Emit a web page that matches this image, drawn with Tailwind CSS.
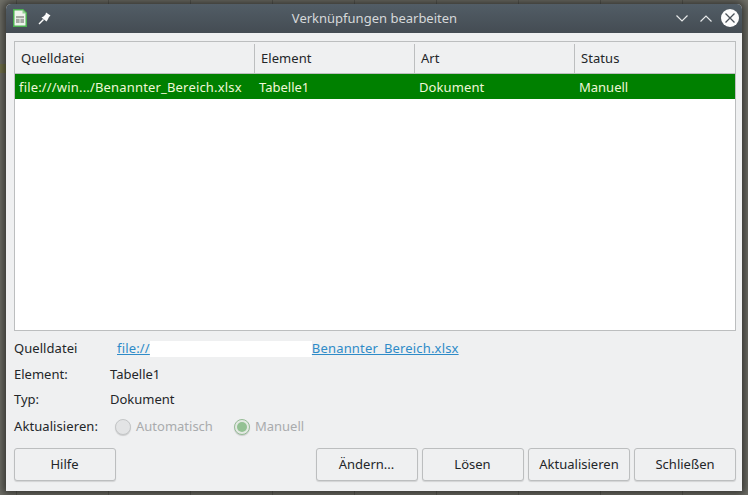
<!DOCTYPE html>
<html lang="de">
<head>
  <meta charset="UTF-8">
  <title>Verknüpfungen bearbeiten</title>
  <script src="https://cdn.jsdelivr.net/npm/@tailwindcss/browser@4"></script>
</head>
<body class="w-[748px] h-[495px] overflow-hidden relative bg-[#72726a] font-['Noto_Sans',sans-serif] text-[13px] text-[#232629]">

<!-- spreadsheet behind the dialog -->
<div class="absolute inset-0 bg-[repeating-linear-gradient(90deg,transparent_0,transparent_81px,#5e5e57_81px,#5e5e57_82px)] bg-[position:27px_0]"></div>
<div class="absolute left-0 top-[64px] w-[6px] h-[9px] bg-[#77774e]"></div>

<!-- window -->
<div class="absolute left-[6px] top-[4px] w-[736px] h-[487px] flex flex-col bg-[#eff0f1] rounded-t-[5px] shadow-[0_0_8px_3px_rgba(0,0,0,0.55)] overflow-hidden">

  <!-- title bar -->
  <div class="h-[29px] shrink-0 flex items-center relative bg-gradient-to-b from-[#525d66] to-[#444c53]">
    <svg class="absolute left-[7px] top-[5px]" width="14" height="18" viewBox="0 0 14 18">
      <path d="M0.75 0.75H10L13.25 4V17.25H0.75Z" fill="#eef3ec" stroke="#4caf50" stroke-width="1.5"/>
      <path d="M9.5 0.5V4.5H13.5Z" fill="#8fcf8f"/>
      <rect x="3" y="7" width="8" height="7" fill="#a5a9a2"/>
      <path d="M3 9.5H11M7 9.5V14" stroke="#eef3ec" stroke-width="0.8"/>
    </svg>
    <svg class="absolute left-[32px] top-[8px]" width="13" height="13" viewBox="0 0 13 13">
      <path d="M8 0.5L12.5 3.5L11 5L9.5 8L8.5 9.5L3.5 5.5L5.5 4.5L7.5 2.5Z" fill="#fcfcfc"/>
      <path d="M5.5 7.5L1 12" stroke="#fcfcfc" stroke-width="1.4"/>
    </svg>
    <div class="w-full text-center text-[#d6d9da] text-[13px] pl-[1px]">Verknüpfungen bearbeiten</div>
    <svg class="absolute left-[669px] top-[10px]" width="14" height="9" viewBox="0 0 14 9" fill="none" stroke="#e6e8e9" stroke-width="1.2">
      <path d="M1.5 1.5L7 7L12.5 1.5"/>
    </svg>
    <svg class="absolute left-[693px] top-[10px]" width="14" height="9" viewBox="0 0 14 9" fill="none" stroke="#e6e8e9" stroke-width="1.2">
      <path d="M1.5 7.5L7 2L12.5 7.5"/>
    </svg>
    <svg class="absolute left-[715px] top-[5px]" width="18" height="18" viewBox="0 0 18 18">
      <circle cx="9" cy="9" r="9" fill="#fcfcfc"/>
      <path d="M4.5 4.5L13.5 13.5M13.5 4.5L4.5 13.5" stroke="#4a5259" stroke-width="1.3"/>
    </svg>
  </div>

  <div class="flex-1 flex flex-col pl-[8px] pr-[6px]">
    <!-- link table -->
    <div class="mt-[8px] h-[290px] shrink-0 border border-[#bcbebf] bg-white">
      <div class="h-[32px] flex items-center bg-[#eff0f1] border-b border-[#bcbebf] pt-[2px] tracking-[0.06px]">
        <div class="w-[240px] h-full flex items-center pl-[6px] border-r border-[#bcbebf]">Quelldatei</div>
        <div class="w-[160px] h-full flex items-center pl-[6px] border-r border-[#bcbebf]">Element</div>
        <div class="w-[160px] h-full flex items-center pl-[6px] border-r border-[#bcbebf]">Art</div>
        <div class="flex-1 h-full flex items-center pl-[6px]">Status</div>
      </div>
      <div class="h-[25px] flex items-center bg-[#008000] text-[#eff7d8] pt-[2px]">
        <div class="w-[240px] pl-[4px] whitespace-nowrap tracking-[0.17px]">file:///win.../Benannter_Bereich.xlsx</div>
        <div class="w-[160px] pl-[4px]">Tabelle1</div>
        <div class="w-[160px] pl-[4px] tracking-[0.1px]">Dokument</div>
        <div class="flex-1 pl-[4px]">Manuell</div>
      </div>
    </div>

    <!-- details -->
    <div class="h-[25px] mt-[5px] flex items-center">
      <div class="w-[103px] tracking-[0.06px]">Quelldatei</div>
      <div class="flex items-center text-[#2e8bc8] underline whitespace-nowrap tracking-[0.17px]">
        <span>file://</span>
        <span class="w-[162px] h-[16px] bg-white"></span>
        <span>Benannter_Bereich.xlsx</span>
      </div>
    </div>
    <div class="h-[25px] mt-[1px] flex items-center">
      <div class="w-[96px]">Element:</div>
      <div>Tabelle1</div>
    </div>
    <div class="h-[25px] flex items-center">
      <div class="w-[96px]">Typ:</div>
      <div>Dokument</div>
    </div>
    <div class="h-[25px] mt-[2px] flex items-center">
      <div class="w-[101px] tracking-[0.08px]">Aktualisieren:</div>
      <div class="flex items-center text-[#a9abad]">
        <span class="w-[16px] h-[16px] rounded-full bg-[#e3e4e5] border border-[#c4c6c7] shadow-[0_1px_1px_rgba(0,0,0,0.15)]"></span>
        <span class="ml-[5px]">Automatisch</span>
        <span class="ml-[21px] w-[16px] h-[16px] rounded-full bg-[#e3e9e3] border border-[#96bc96] flex items-center justify-center shadow-[0_1px_1px_rgba(0,0,0,0.15)]">
          <span class="w-[10px] h-[10px] rounded-full bg-[#93c193]"></span>
        </span>
        <span class="ml-[5px]">Manuell</span>
      </div>
    </div>

    <!-- buttons -->
    <div class="mt-[9px] flex">
      <button class="w-[102px] h-[33px] pr-[1px] border border-[#bcbebf] rounded-[3px] bg-[#eff0f1] shadow-[0_1px_1px_rgba(0,0,0,0.12)]">Hilfe</button>
      <div class="ml-auto flex gap-[4px]">
        <button class="w-[102px] h-[33px] pr-[1px] border border-[#bcbebf] rounded-[3px] bg-[#eff0f1] shadow-[0_1px_1px_rgba(0,0,0,0.12)]">Ändern...</button>
        <button class="w-[102px] h-[33px] pr-[1px] border border-[#bcbebf] rounded-[3px] bg-[#eff0f1] shadow-[0_1px_1px_rgba(0,0,0,0.12)]">Lösen</button>
        <button class="w-[102px] h-[33px] border border-[#bcbebf] rounded-[3px] bg-[#eff0f1] shadow-[0_1px_1px_rgba(0,0,0,0.12)]">Aktualisieren</button>
        <button class="w-[102px] h-[33px] border border-[#bcbebf] rounded-[3px] bg-[#eff0f1] shadow-[0_1px_1px_rgba(0,0,0,0.12)]">Schließen</button>
      </div>
    </div>
  </div>
</div>
</body>
</html>
